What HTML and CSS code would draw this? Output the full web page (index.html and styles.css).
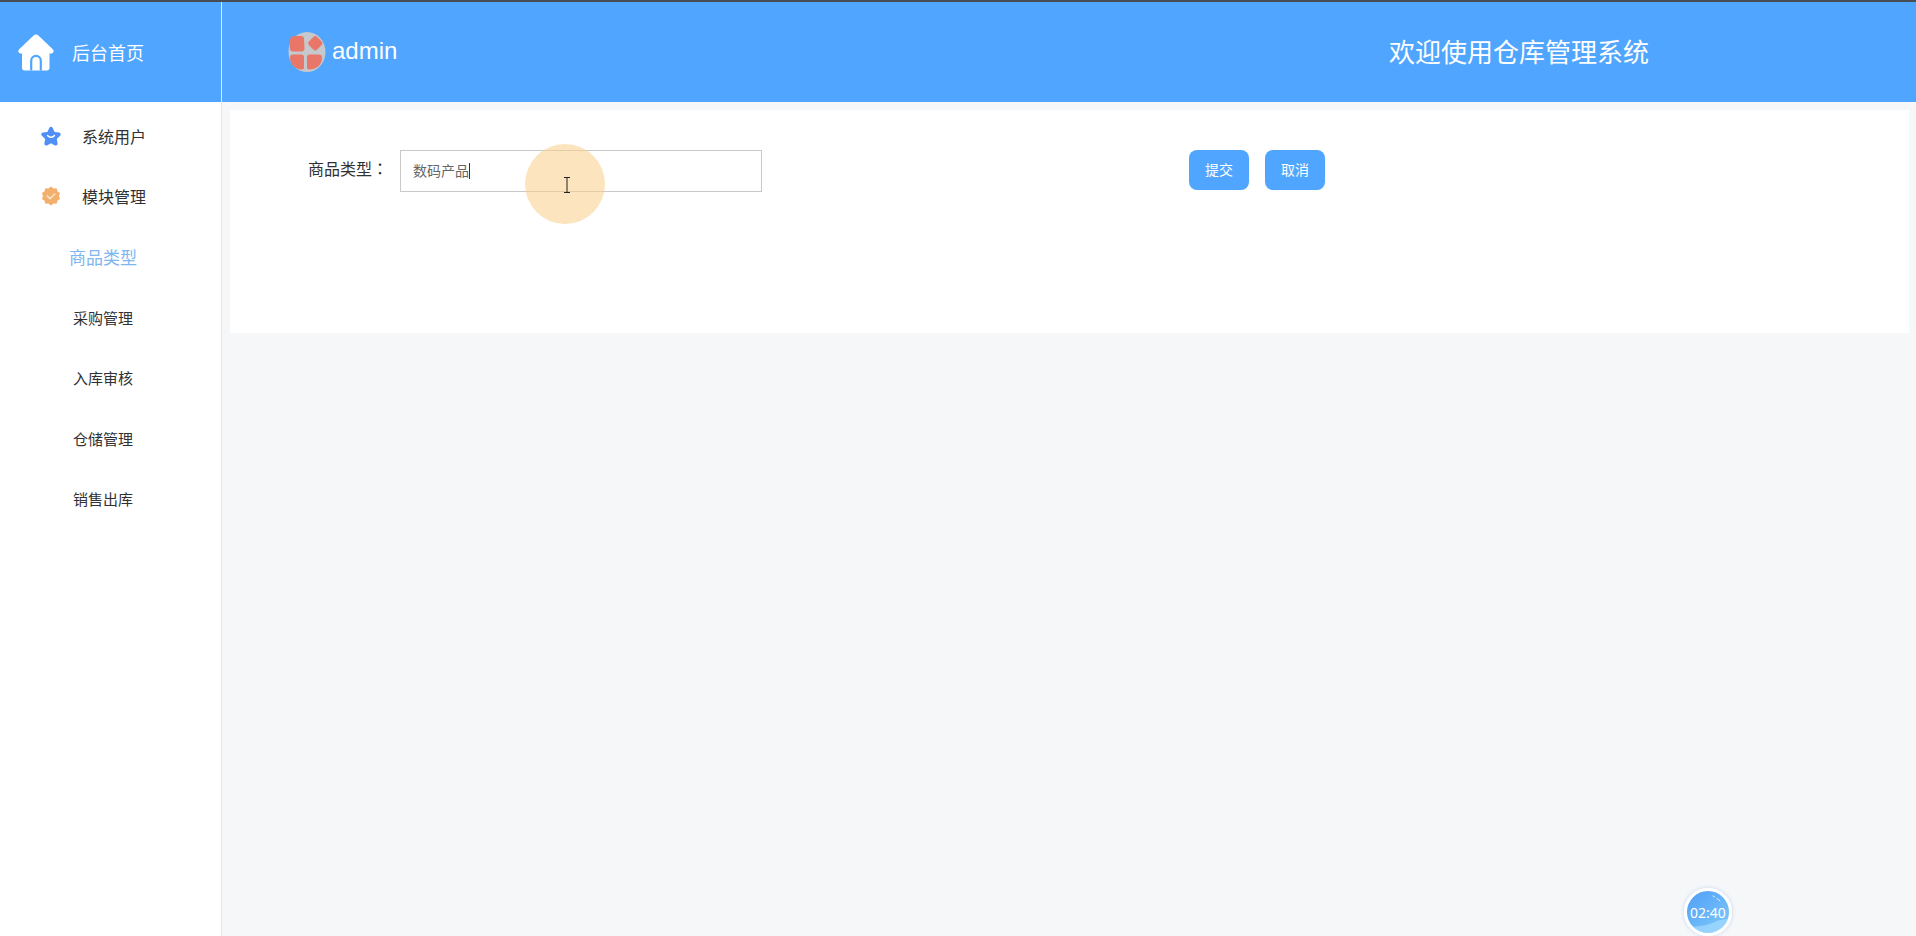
FILE: index.html
```html
<!DOCTYPE html>
<html lang="zh-CN">
<head>
  <meta charset="UTF-8">
  <title>仓库管理系统</title>
  <link rel="stylesheet" href="styles.css">
</head>
<body>
  <div class="topline"></div>
  <header class="header">
    <a class="home" href="#">
      <svg class="home-icon" viewBox="0 0 38 38">
        <path d="M19 .5c.9 0 1.700.3 2.400 1l14.400 13.700c1.700 1.600.6 4.300-1.600 4.300h-1.700V34c0 1.400-1.100 2.500-2.500 2.500H7.500C6.100 36.500 5 35.400 5 34V19.500H3.800c-2.200 0-3.300-2.700-1.600-4.300L16.600 1.500c.7-.7 1.500-1 2.400-1z" fill="#fff"/>
        <path d="M14.200 36.500v-9.800a4.800 4.800 0 0 1 9.600 0v9.800" fill="none" stroke="#50a5ff" stroke-width="2.200"/>
      </svg>
      <span>后台首页</span>
    </a>
    <div class="user">
      <svg class="avatar" viewBox="0 0 38 40">
        <ellipse cx="19" cy="20" rx="18.500" ry="20" fill="#c5c8cc"/>
        <path d="M6 4h7c2 0 3 1 3 3l.5 9.500c0 2-1 3-3 3H5c-2 0-3-1-3-3V8c0-2 2-4 4-4z" fill="#e8776a"/>
        <rect x="21.500" y="5.500" width="11.500" height="11.500" rx="2.800" fill="#e8776a" transform="rotate(45 27.250 11.250)"/>
        <path d="M5 22.500h8.500c1.500 0 2.500 1 2.500 2.500v10.500c0 1.500-1 2-2.500 2-5 0-11.500-4-11.500-12 0-2 1-3 3-3z" fill="#e8776a"/>
        <path d="M21.500 22.500H31c2 0 3 1 3 3 0 7-5 12-12.500 12-2 0-2.500-1-2.500-2.500V25c0-1.500 1-2.500 2.500-2.500z" fill="#e8776a"/>
      </svg>
      <span class="user-name">admin</span>
    </div>
    <h1 class="welcome">欢迎使用仓库管理系统</h1>
  </header>

  <div class="layout">
    <nav class="sidebar">
      <a class="nav-item" href="#">
        <svg class="nav-icon" viewBox="0 0 20 20">
          <path d="M10 .8c.7 0 1.300.4 1.600 1l2 4.200 4.500.6c1.500.2 2.100 2 1 3.100l-3.300 3.200.8 4.600c.3 1.500-1.300 2.600-2.600 1.900L10 17.300l-4 2.100c-1.300.7-2.900-.4-2.600-1.900l.8-4.600L.9 9.700c-1.100-1.100-.5-2.900 1-3.100l4.500-.6 2-4.200c.3-.6.900-1 1.600-1z" fill="#4f8ff7"/>
          <path d="M6.500 9.500c1.800 2.300 5.200 2.300 7 0" fill="none" stroke="#fff" stroke-width="1.400" stroke-linecap="round"/>
        </svg>
        <span>系统用户</span>
      </a>
      <a class="nav-item" href="#">
        <svg class="nav-icon" viewBox="0 0 20 20">
          <polygon points="10,.5 12.470,2.390 15.580,2.310 16.470,5.300 19.030,7.060 18,10 19.030,12.940 16.470,14.700 15.580,17.690 12.470,17.610 10,19.500 7.530,17.610 4.420,17.690 3.530,14.700 .97,12.940 2,10 .97,7.060 3.530,5.300 4.420,2.310 7.530,2.390" fill="#f2b06c"/>
          <path d="M6.300 10l2.700 2.600 4.800-4.600" fill="none" stroke="#fbe6cf" stroke-width="1.500" stroke-linecap="round" stroke-linejoin="round"/>
        </svg>
        <span>模块管理</span>
      </a>
      <a class="sub-item active" href="#">商品类型</a>
      <a class="sub-item" href="#">采购管理</a>
      <a class="sub-item" href="#">入库审核</a>
      <a class="sub-item" href="#">仓储管理</a>
      <a class="sub-item" href="#">销售出库</a>
    </nav>

    <main class="content">
      <form class="card">
        <label class="field-label">商品类型<span class="colon" lang="zh-TW">：</span></label>
        <div class="field-input"><span class="field-text">数码产品</span></div>
        <button type="button" class="btn">提交</button>
        <button type="button" class="btn">取消</button>
      </form>
    </main>
  </div>

  <!-- screen recorder overlays -->
  <div class="cursor-dot"></div>
  <svg class="cursor-beam" viewBox="0 0 8 16">
    <path d="M1 .5h6M4 .5v15M1 15.500h6" fill="none" stroke="#222" stroke-width="1"/>
  </svg>
  <div class="timer">
    <svg class="timer-wave" viewBox="0 0 42 42">
      <path d="M4 36c10-1 18-2 26-6 3-1 7-2 12-2v14H4z" fill="#a5dcfd" opacity=".7"/>
      <path d="M26 5l1.500.8M30 7.500c1 .6 2 1.400 3 2.500" fill="none" stroke="#fff" stroke-width="1" stroke-linecap="round" opacity=".8"/>
    </svg>
    <span class="timer-text">02:40</span>
  </div>
</body>
</html>
```

FILE: styles.css
```css
* {
  box-sizing: border-box;
}
html, body {
  height: 100%;
}
body {
  margin: 0;
  display: flex;
  flex-direction: column;
  overflow: hidden;
  position: relative;
  background: #f6f7f9;
  color: #303133;
  font-family: "Liberation Sans", "Noto Sans CJK SC", sans-serif;
}
a {
  color: inherit;
  text-decoration: none;
}

.topline {
  height: 2px;
  background: #474c55;
}

/* header */
.header {
  height: 100px;
  flex-shrink: 0;
  display: flex;
  align-items: center;
  background: #50a5ff;
  color: #fff;
}
.home {
  width: 222px;
  height: 100%;
  display: flex;
  align-items: center;
  padding-left: 17px;
  border-right: 1px solid #d9ebff;
  font-size: 18px;
}
.home-icon {
  width: 38px;
  height: 38px;
  margin: 2px 17px 0 0;
}
.user {
  display: flex;
  align-items: center;
  margin-left: 66px;
}
.avatar {
  width: 38px;
  height: 40px;
  margin-right: 6px;
}
.user-name {
  font-size: 24px;
  padding-bottom: 3px;
}
.welcome {
  margin: 0 267px 0 auto;
  padding-bottom: 3px;
  font-size: 26px;
  font-weight: normal;
}

/* sidebar */
.layout {
  flex: 1;
  display: flex;
  min-height: 0;
}
.sidebar {
  width: 222px;
  flex-shrink: 0;
  padding-top: 3.500px;
  background: #fff;
  border-right: 1px solid #e4e6ea;
}
.nav-item {
  height: 60.500px;
  display: flex;
  align-items: center;
  padding-left: 41px;
  font-size: 16px;
}
.nav-icon {
  width: 20px;
  height: 20px;
  margin-right: 21px;
}
.sub-item {
  height: 60.500px;
  width: 206px;
  display: flex;
  align-items: center;
  justify-content: center;
  font-size: 15px;
}
.sub-item.active {
  color: #7db6f0;
  font-size: 17px;
}

/* main form */
.content {
  flex: 1;
  padding: 8px 7px 0 8px;
}
.card {
  height: 223px;
  display: flex;
  align-items: flex-start;
  padding: 40px 0 0 78px;
  background: #fff;
}
.field-label {
  width: 92px;
  line-height: 40px;
  font-size: 16px;
}
.colon {
  font-family: "Noto Sans CJK TC", sans-serif;
  line-height: 1;
}
.field-input {
  width: 362px;
  height: 42px;
  margin-right: 427px;
  padding-left: 12px;
  border: 1px solid #c9c9c9;
  line-height: 40px;
  font-size: 14px;
  color: #666;
}
.field-text {
  display: inline-block;
  line-height: 16px;
  border-right: 1px solid #333;
}
.btn {
  width: 60px;
  height: 40px;
  margin-right: 16px;
  padding: 0 0 2px;
  border: none;
  border-radius: 8px;
  background: #50a5ff;
  color: #fff;
  font-family: inherit;
  font-size: 14px;
}

/* recorder overlays */
.cursor-dot {
  position: absolute;
  left: 525px;
  top: 144px;
  width: 80px;
  height: 80px;
  border-radius: 50%;
  background: rgba(248, 205, 137, 0.55);
}
.cursor-beam {
  position: absolute;
  left: 563px;
  top: 177px;
  width: 8px;
  height: 16px;
}
.timer {
  position: absolute;
  left: 1684px;
  top: 888px;
  width: 48px;
  height: 48px;
  border: 3px solid #fff;
  border-radius: 50%;
  overflow: hidden;
  display: flex;
  align-items: center;
  justify-content: center;
  background: linear-gradient(140deg, #509df6, #80ccfc);
  box-shadow: 0 0 4px rgba(120, 170, 230, 0.4);
}
.timer-wave {
  position: absolute;
  left: 0;
  top: 0;
  width: 42px;
  height: 42px;
}
.timer-text {
  position: relative;
  color: #fff;
  font-family: "Noto Sans", sans-serif;
  font-size: 14px;
}
```
